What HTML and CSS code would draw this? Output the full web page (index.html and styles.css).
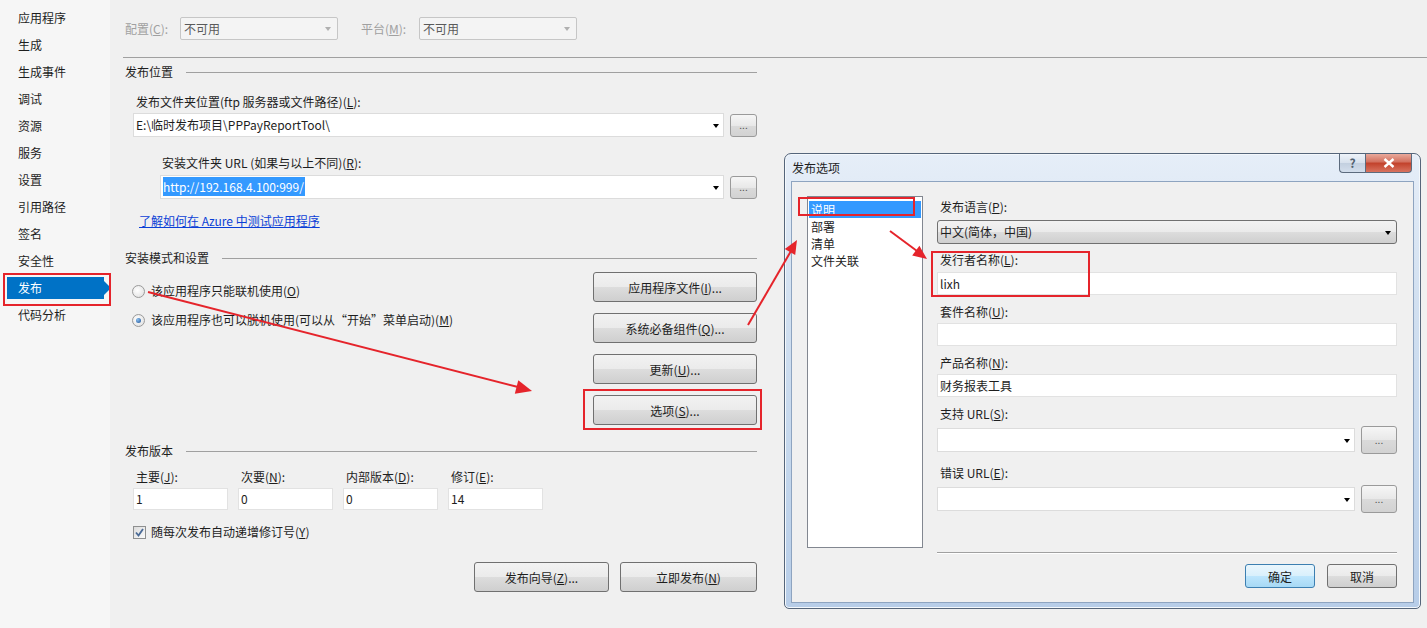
FILE: index.html
```html
<!DOCTYPE html>
<html lang="zh-CN">
<head>
  <meta charset="UTF-8" />
  <title>发布 - 项目属性</title>
  <link rel="stylesheet" href="styles.css">
</head>
<body>
  <!-- left tab list -->
  <nav class="nav">
    <div class="nav-item">应用程序</div>
    <div class="nav-item">生成</div>
    <div class="nav-item">生成事件</div>
    <div class="nav-item">调试</div>
    <div class="nav-item">资源</div>
    <div class="nav-item">服务</div>
    <div class="nav-item">设置</div>
    <div class="nav-item">引用路径</div>
    <div class="nav-item">签名</div>
    <div class="nav-item">安全性</div>
    <div class="nav-item active">发布</div>
    <div class="nav-item">代码分析</div>
  </nav>

  <main class="main">
    <div class="topbar">
      <span class="top-label cfg">配置(<u>C</u>):</span>
      <div class="select-off">不可用</div>
      <span class="top-label plat">平台(<u>M</u>):</span>
      <div class="select-off">不可用</div>
    </div>

    <div class="content">
      <!-- publish location -->
      <div class="group">发布位置</div>
      <div class="label loc-label">发布文件夹位置(ftp 服务器或文件路径)(<u>L</u>):</div>
      <div class="combo-row loc-row">
        <div class="combo">E:\临时发布项目\PPPayReportTool\</div>
        <button class="dots">...</button>
      </div>
      <div class="label url-label">安装文件夹 URL (如果与以上不同)(<u>R</u>):</div>
      <div class="combo-row url-row">
        <div class="combo"><span class="sel">http://192.168.4.100:999/</span></div>
        <button class="dots">...</button>
      </div>
      <a class="link" href="#">了解如何在 Azure 中测试应用程序</a>

      <!-- install mode -->
      <div class="group group-install">安装模式和设置</div>
      <div class="install">
        <div class="radios">
          <div class="radio-row"><span class="radio"></span>该应用程序只能联机使用(<u>O</u>)</div>
          <div class="radio-row"><span class="radio checked"></span>该应用程序也可以脱机使用(可以从“开始”菜单启动)(<u>M</u>)</div>
        </div>
        <div class="side-buttons">
          <button class="btn">应用程序文件(<u>I</u>)...</button>
          <button class="btn">系统必备组件(<u>Q</u>)...</button>
          <button class="btn">更新(<u>U</u>)...</button>
          <button class="btn">选项(<u>S</u>)...</button>
        </div>
      </div>

      <!-- version -->
      <div class="group group-version">发布版本</div>
      <div class="versions">
        <div class="ver"><div class="ver-label">主要(<u>J</u>):</div><div class="textbox">1</div></div>
        <div class="ver"><div class="ver-label">次要(<u>N</u>):</div><div class="textbox">0</div></div>
        <div class="ver"><div class="ver-label">内部版本(<u>D</u>):</div><div class="textbox">0</div></div>
        <div class="ver"><div class="ver-label">修订(<u>E</u>):</div><div class="textbox">14</div></div>
      </div>
      <div class="check-row">
        <span class="checkbox">
          <svg width="9" height="9" viewBox="0 0 9 9"><path d="M1 4.5 L3.5 7.5 L8 1" fill="none" stroke="#4a6a96" stroke-width="1.8"/></svg>
        </span>
        随每次发布自动递增修订号(<u>Y</u>)
      </div>

      <div class="actions">
        <button class="btn wizard">发布向导(<u>Z</u>)...</button>
        <button class="btn publish">立即发布(<u>N</u>)</button>
      </div>
    </div>
  </main>

  <!-- publish options dialog -->
  <div class="dialog">
    <div class="dlg-title">发布选项</div>
    <div class="caption-btns">
      <span class="cap-help">?</span>
      <span class="cap-close">
        <svg width="12" height="10" viewBox="0 0 12 10"><path d="M1.5 1 L10.5 9 M10.5 1 L1.5 9" stroke="#fff" stroke-width="2.4"/></svg>
      </span>
    </div>
    <div class="dlg-client">
      <div class="listbox">
        <div class="list-item selected">说明</div>
        <div class="list-item">部署</div>
        <div class="list-item">清单</div>
        <div class="list-item">文件关联</div>
      </div>
      <div class="dlg-form">
        <div class="f-label first">发布语言(<u>P</u>):</div>
        <div class="dropdown">中文(简体，中国)</div>
        <div class="f-label l2">发行者名称(<u>L</u>):</div>
        <div class="textbox dlg-input i2">lixh</div>
        <div class="f-label">套件名称(<u>U</u>):</div>
        <div class="textbox dlg-input"></div>
        <div class="f-label">产品名称(<u>N</u>):</div>
        <div class="textbox dlg-input">财务报表工具</div>
        <div class="f-label">支持 URL(<u>S</u>):</div>
        <div class="url-line">
          <div class="combo"></div>
          <button class="dots big">...</button>
        </div>
        <div class="f-label l6">错误 URL(<u>E</u>):</div>
        <div class="url-line">
          <div class="combo"></div>
          <button class="dots big">...</button>
        </div>
        <div class="dlg-sep"></div>
        <div class="dlg-actions">
          <button class="btn small default">确定</button>
          <button class="btn small">取消</button>
        </div>
      </div>
    </div>
  </div>

  <!-- red annotations drawn over the screenshot -->
  <svg class="marks" width="1427" height="628" viewBox="0 0 1427 628">
    <g fill="none" stroke="#e5242b" stroke-width="2">
      <rect x="4" y="274" width="106" height="31"/>
      <rect x="584" y="390" width="177" height="39"/>
      <rect x="799" y="198" width="115" height="17"/>
      <rect x="932" y="252" width="157" height="44"/>
      <line x1="148" y1="292" x2="518" y2="387"/>
      <line x1="748" y1="325" x2="791" y2="251"/>
      <line x1="890" y1="231" x2="917" y2="251"/>
    </g>
    <g fill="#e5242b">
      <polygon points="532,391 518.3,380.2 514.8,393.8"/>
      <polygon points="797,240 795.2,255.1 784.8,249.1"/>
      <polygon points="927,259 912.2,255.4 919.4,245.8"/>
    </g>
  </svg>
</body>
</html>
```

FILE: styles.css
```css
/* ---------- page ---------- */
* {
  box-sizing: border-box;
}
body {
  margin: 0;
  width: 1427px;
  height: 628px;
  overflow: hidden;
  display: flex;
  position: relative;
  background: #f0f0f0;
  color: #1e1e1e;
  font-family: "Noto Sans CJK SC", "Noto Sans", sans-serif;
  font-size: 12px;
  line-height: 16px;
}
u {
  text-decoration: underline;
}
button {
  font-family: inherit;
  font-size: 12px;
  color: #1e1e1e;
  padding: 0;
  cursor: default;
}

/* ---------- left tabs ---------- */
.nav {
  width: 110px;
  flex: none;
  background: #f6f6f6;
  padding-top: 7px;
}
.nav-item {
  height: 22px;
  line-height: 22px;
  margin-bottom: 5px;
  padding-left: 18px;
}
.nav-item.active {
  position: relative;
  margin-left: 7px;
  width: 97px;
  padding-left: 11px;
  background: #0072c6;
  color: #fff;
}
.nav-item.active::after {
  content: "";
  position: absolute;
  right: -7px;
  top: 4px;
  border-left: 7px solid #0072c6;
  border-top: 7px solid transparent;
  border-bottom: 7px solid transparent;
}

/* ---------- main ---------- */
.main {
  flex: 1;
  padding-left: 13px;
}
.topbar {
  height: 58px;
  padding: 17px 0 0 2px;
  border-bottom: 1px solid #a0a0a0;
  display: flex;
  align-items: flex-start;
}
.top-label {
  color: #a0a0a0;
  line-height: 23px;
}
.top-label.cfg {
  width: 55px;
}
.top-label.plat {
  width: 58px;
  margin-left: 23px;
}
.select-off {
  position: relative;
  width: 158px;
  height: 23px;
  line-height: 21px;
  padding-left: 3px;
  border: 1px solid #c6c6c6;
  border-radius: 2px;
  background: #f4f4f4;
  color: #5a5a5a;
}
.select-off::after {
  content: "";
  position: absolute;
  right: 6px;
  top: 9px;
  border-top: 4px solid #b0b0b0;
  border-left: 3px solid transparent;
  border-right: 3px solid transparent;
}

.content {
  width: 632px;
  margin-left: 2px;
}
.group {
  display: flex;
  align-items: center;
  margin-top: 6px;
}
.group::after {
  content: "";
  flex: 1;
  border-top: 1px solid #a0a0a0;
  margin-left: 13px;
}
.group-install {
  margin-top: 21px;
}
.group-version {
  margin-top: 18px;
}

.loc-label {
  margin-top: 14px;
  padding-left: 11px;
}
.url-label {
  margin-top: 18px;
  padding-left: 37px;
}
.combo-row {
  display: flex;
  align-items: center;
  gap: 6px;
}
.loc-row {
  margin-top: 3px;
  margin-left: 8px;
}
.url-row {
  margin-top: 4px;
  margin-left: 35px;
}
.combo {
  position: relative;
  flex: 1;
  height: 24px;
  line-height: 22px;
  padding-left: 2px;
  background: #fff;
  border: 1px solid #dcdcdc;
  white-space: nowrap;
}
.combo::after {
  content: "";
  position: absolute;
  right: 4px;
  top: 10px;
  border-top: 4px solid #000;
  border-left: 3.5px solid transparent;
  border-right: 3.5px solid transparent;
}
.sel {
  display: inline-block;
  background: #3399ff;
  color: #fff;
  line-height: 19px;
  padding-right: 1px;
}
.dots {
  width: 27px;
  height: 23px;
  border: 1px solid #9a9a9a;
  border-radius: 3px;
  background: linear-gradient(#f6f6f6, #e8e8e8 50%, #dadada 51%, #d2d2d2);
  color: #555;
  font-size: 10px;
  line-height: 18px;
  text-align: center;
}
.link {
  display: block;
  margin-top: 14px;
  padding-left: 14px;
  color: #0b3fd6;
  text-decoration: underline;
}

/* ---------- install mode ---------- */
.install {
  display: flex;
  margin-top: 6px;
}
.radios {
  flex: 1;
  padding: 11px 0 0 7px;
}
.radio-row {
  display: flex;
  align-items: center;
  height: 16px;
  margin-bottom: 13px;
}
.radio {
  position: relative;
  width: 13px;
  height: 13px;
  margin-right: 6px;
  border-radius: 50%;
  border: 1px solid #9a9a9a;
  background: radial-gradient(circle at 40% 40%, #fff, #dcdcdc);
}
.radio.checked::after {
  content: "";
  position: absolute;
  left: 3px;
  top: 3px;
  width: 5px;
  height: 5px;
  border-radius: 50%;
  background: radial-gradient(circle at 35% 35%, #8ac0f0, #1d4f93);
}
.side-buttons {
  width: 164px;
  display: flex;
  flex-direction: column;
  gap: 11px;
}
.btn {
  height: 30px;
  border: 1px solid #707070;
  border-radius: 3px;
  background: linear-gradient(#f2f2f2, #ebebeb 49%, #dddddd 50%, #cfcfcf);
  text-align: center;
}

/* ---------- version ---------- */
.versions {
  display: flex;
  gap: 10px;
  margin: 10px 0 0 8px;
}
.ver {
  width: 95px;
}
.ver-label {
  padding-left: 3px;
}
.textbox {
  height: 22px;
  line-height: 20px;
  margin-top: 3px;
  padding-left: 2px;
  background: #fff;
  border: 1px solid #e2e2e2;
}
.check-row {
  display: flex;
  align-items: center;
  margin: 14px 0 0 8px;
  height: 16px;
}
.checkbox {
  width: 13px;
  height: 13px;
  margin-right: 5px;
  border: 1px solid #8e8f8f;
  background: linear-gradient(135deg, #dcdcdc, #fafafa);
  display: flex;
  align-items: center;
  justify-content: center;
}
.actions {
  display: flex;
  justify-content: flex-end;
  gap: 11px;
  margin-top: 22px;
}
.wizard {
  width: 135px;
}
.publish {
  width: 137px;
}

/* ---------- dialog ---------- */
.dialog {
  position: absolute;
  left: 784px;
  top: 153px;
  width: 637px;
  height: 456px;
  padding: 0 6px 6px 6px;
  border: 1px solid #55657a;
  border-radius: 7px 7px 5px 5px;
  background: linear-gradient(#e6eef8, #d3e1f1 30%, #c3d6ec 70%, #b7cde8);
  box-shadow: inset 0 0 0 1px #f4f8fc;
}
.dlg-title {
  height: 27px;
  line-height: 28px;
  padding-left: 1px;
}
.caption-btns {
  position: absolute;
  right: 8px;
  top: 0;
  display: flex;
}
.cap-help,
.cap-close {
  height: 19px;
  display: flex;
  align-items: center;
  justify-content: center;
  border: 1px solid #5c6b7d;
  border-top: none;
}
.cap-help {
  width: 26px;
  border-radius: 0 0 0 4px;
  border-right: none;
  background: linear-gradient(#eef3f9, #d6e0ec 50%, #c2cfdf 51%, #d3deec);
  color: #51606f;
  font-weight: bold;
  font-size: 12px;
}
.cap-close {
  width: 47px;
  border-radius: 0 0 4px 0;
  background: linear-gradient(#e9a99b, #d26f5d 45%, #c2412b 50%, #d8735f);
}
.dlg-client {
  height: 422px;
  display: flex;
  align-items: flex-start;
  padding: 14px 0 0 15px;
  background: #f0f0f0;
  border: 1px solid #8ea4c0;
}
.listbox {
  width: 116px;
  height: 352px;
  padding: 4px 1px 0 1px;
  background: #fff;
  border: 1px solid #828790;
}
.list-item {
  height: 17px;
  line-height: 17px;
  padding-left: 2px;
}
.list-item.selected {
  background: #3399ff;
  color: #fff;
}
.dlg-form {
  width: 460px;
  margin: 3px 0 0 14px;
}
.f-label {
  margin-top: 9px;
  padding-left: 3px;
}
.f-label.first {
  margin-top: 0;
}
.f-label.l2 {
  margin-top: 8px;
}
.f-label.l6 {
  margin-top: 11px;
}
.dropdown {
  position: relative;
  height: 24px;
  line-height: 22px;
  margin-top: 5px;
  padding-left: 2px;
  border: 1px solid #707070;
  border-radius: 3px;
  background: linear-gradient(#f2f2f2, #ebebeb 49%, #dddddd 50%, #cfcfcf);
}
.dropdown::after {
  content: "";
  position: absolute;
  right: 5px;
  top: 10px;
  border-top: 4px solid #000;
  border-left: 3.5px solid transparent;
  border-right: 3.5px solid transparent;
}
.dlg-input {
  height: 23px;
  line-height: 21px;
}
.dlg-input.i2 {
  margin-top: 4px;
}
.url-line {
  display: flex;
  align-items: center;
  gap: 6px;
  height: 28px;
  margin-top: 4px;
}
.dots.big {
  width: 36px;
  height: 28px;
  line-height: 22px;
}
.dlg-sep {
  margin-top: 39px;
  border-top: 1px solid #a0a0a0;
  border-bottom: 1px solid #fff;
}
.dlg-actions {
  display: flex;
  justify-content: flex-end;
  gap: 12px;
  margin-top: 10px;
}
.btn.small {
  width: 70px;
  height: 24px;
}
.btn.default {
  border-color: #3c7fb1;
  background: linear-gradient(#eaf6fd, #d9f0fc 49%, #bee6fd 50%, #a7d9f5);
}

/* ---------- annotations ---------- */
.marks {
  position: absolute;
  left: 0;
  top: 0;
  pointer-events: none;
}
```
